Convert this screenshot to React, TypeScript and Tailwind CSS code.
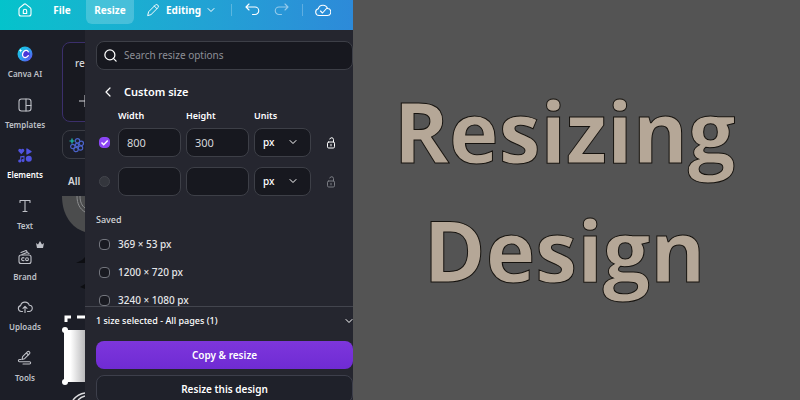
import React, { useState } from "react";
import { ChevronDown, ChevronLeft, Search } from "lucide-react";

const SAVED_SIZES = ["369 × 53 px", "1200 × 720 px", "3240 × 1080 px"];

function Icon({ children, className = "size-4" }: { children: React.ReactNode; className?: string }) {
  return (
    <svg
      viewBox="0 0 16 16"
      className={className}
      fill="none"
      stroke="currentColor"
      strokeWidth={1.1}
      strokeLinecap="round"
      strokeLinejoin="round"
      aria-hidden="true"
    >
      {children}
    </svg>
  );
}

const AiIcon = () => (
  <svg viewBox="0 0 16 16" className="size-4" aria-hidden="true">
    <defs>
      <linearGradient id="ai" x1="0" y1="0" x2="1" y2="1">
        <stop offset="0" stopColor="#12d2dc" />
        <stop offset="0.5" stopColor="#2aa4ee" />
        <stop offset="1" stopColor="#6a3df0" />
      </linearGradient>
    </defs>
    <circle cx="8" cy="8" r="7.5" fill="url(#ai)" />
    <circle cx="8.8" cy="8.2" r="4" fill="#4b35d8" />
    <path d="M11.3 5.8c-.7-1.6-2.8-1.9-4.3-.5-1.8 1.7-2 4.5-.5 5.7 1.5 1.1 3.7.4 4.8-1.4" fill="none" stroke="#fff" strokeWidth="1.3" strokeLinecap="round" />
    <path d="M3.6 2.8l.5 1.3 1.3.5-1.3.5-.5 1.3-.5-1.3-1.3-.5 1.3-.5z" fill="#fff" />
  </svg>
);

const TemplatesIcon = () => (
  <Icon>
    <rect x="2" y="2" width="12" height="12" rx="2.5" />
    <path d="M9 2v12M9 8.5h5" />
  </Icon>
);

const ElementsIcon = () => (
  <svg viewBox="0 0 16 16" className="size-4" fill="#5053e0" aria-hidden="true">
    <path d="M4.3 7.3L1.7 4.6C.2 2.8 2.8.4 4.3 2.5 5.8.4 8.4 2.8 6.9 4.6z" />
    <path d="M9.3 2c0-.6.5-.8 1-.5l4 2.5c.5.3.5.9 0 1.2l-4 2.2c-.5.3-1 0-1-.5z" />
    <path d="M3.2 9.3l4.3-.6v4.9a1.5 1.5 0 1 1-1-1.4v-2l-2.3.3v3.6a1.5 1.5 0 1 1-1-1.4z" />
    <circle cx="11.8" cy="11.8" r="3" />
  </svg>
);

const TextIcon = () => (
  <Icon>
    <path d="M3 4.500V2.500h10v2M8 2.500v11M6 13.500h4" />
  </Icon>
);

const BrandIcon = () => (
  <Icon>
    <rect x="2" y="6" width="12" height="8.5" rx="2" />
    <path d="M4 3.500l5-2 1 1M5 5.500l5-2 2 1" />
    <path d="M7 9a1.500 1.500 0 1 0 0 2.400" />
    <circle cx="10" cy="10.200" r="1.400" />
  </Icon>
);

const UploadsIcon = () => (
  <Icon>
    <path d="M5.500 12.500H4.200a3 3 0 0 1-.6-5.900A4.500 4.500 0 0 1 12.300 6.300a3.100 3.100 0 0 1-.3 6.200h-1.500" />
    <path d="M8 13.500V7.500M6 9.300l2-2 2 2" />
  </Icon>
);

const ToolsIcon = () => (
  <Icon>
    <path d="M5 9.500l.6-2.800 5-5c1.200-1 3 .7 2 2l-5 5zM9.500 3l2 2" />
    <path d="M4 9.500H2.500a1 1 0 0 0 0 2.200h10a1 1 0 0 1 0 2.300H6" />
  </Icon>
);

const LockIcon = () => (
  <svg viewBox="0 0 10 12" className="h-3 w-2.5" fill="none" stroke="currentColor" strokeLinecap="round" aria-hidden="true">
    <rect x="1.5" y="5" width="7" height="6" rx="1.2" />
    <path d="M7.5 5V2.600a1.900 1.900 0 0 0-3.700-.6M5 7.300v1.600" />
  </svg>
);

const NAV = [
  { label: "Canva AI", icon: AiIcon },
  { label: "Templates", icon: TemplatesIcon },
  { label: "Elements", icon: ElementsIcon, active: true },
  { label: "Text", icon: TextIcon },
  { label: "Brand", icon: BrandIcon, pro: true },
  { label: "Uploads", icon: UploadsIcon },
  { label: "Tools", icon: ToolsIcon },
];

function TopBar() {
  return (
    <header className="flex h-[30px] shrink-0 items-start bg-gradient-to-r from-[#04c3cb] to-[#2d8ad9] text-[10px] font-bold text-white">
      <button type="button" aria-label="Home" className="flex h-5 w-[50px] items-center justify-center">
        <Icon>
          <path d="M2 7.300c0-.7.300-1.200.9-1.700L7 2.300c.6-.5 1.400-.5 2 0l4.100 3.300c.6.500.9 1 .9 1.700V12a2 2 0 0 1-2 2H4a2 2 0 0 1-2-2z" />
          <path d="M6.300 11.500V9a1.700 1.700 0 0 1 3.400 0v2.500z" />
        </Icon>
      </button>
      <button type="button" className="h-5 w-6 text-center">File</button>
      <button type="button" className="ml-3 h-6 w-12 rounded-b-md bg-white/20 pb-1">Resize</button>
      <button type="button" className="ml-3 flex h-5 w-[71px] items-center">
        <Icon className="size-3.5">
          <path d="M2 14l1-4L11 2c1.500-1 4 1 3 3l-8 8zM9.500 3.500l3 3" />
        </Icon>
        <span className="ml-1.5 flex-1 text-left">Editing</span>
        <ChevronDown className="size-3" strokeWidth={2} />
      </button>
      <span className="mt-1 ml-3.5 h-3 w-px bg-white/25" />
      <button type="button" aria-label="Undo" className="ml-3 flex h-5 items-center">
        <Icon>
          <path d="M5 2L2 5l3 3M2 5h9a3.500 3.500 0 0 1 0 7.500H8.500" />
        </Icon>
      </button>
      <button type="button" aria-label="Redo" disabled className="ml-3.5 flex h-5 items-center opacity-50">
        <Icon>
          <path d="M11 2l3 3-3 3M14 5H5a3.500 3.500 0 0 0 0 7.500h2.500" />
        </Icon>
      </button>
      <span className="mt-1 ml-3 h-3 w-px bg-white/25" />
      <button type="button" aria-label="Saved" className="ml-3 flex h-5 items-center">
        <Icon>
          <path d="M4 13.500a3.400 3.400 0 0 1-.7-6.700 4.800 4.800 0 0 1 9.200-.3A3.500 3.500 0 0 1 12 13.500zM5.500 9l2 2 4-4.500" />
        </Icon>
      </button>
    </header>
  );
}

function SideNav() {
  return (
    <nav className="flex w-[50px] shrink-0 flex-col justify-between bg-[#1c1e27] pt-4 pb-3.5">
      {NAV.map(({ label, icon: NavIcon, active, pro }) => (
        <a
          key={label}
          href="#"
          className={`relative flex flex-col items-center gap-1 text-[8px] leading-4 font-semibold ${
            active ? "text-white" : "text-[#bfc1c8]"
          }`}
        >
          <NavIcon />
          {label}
          {pro && (
            <svg viewBox="0 0 8 7" className="absolute -top-2 right-1.5 h-[7px] w-2" fill="currentColor" aria-hidden="true">
              <path d="M0 2l2 1.500L4 0l2 3.500L8 2 7 7H1z" />
            </svg>
          )}
        </a>
      ))}
    </nav>
  );
}

function ElementsPanel() {
  return (
    <section className="flex w-[35px] shrink-0 flex-col overflow-hidden bg-[#1c1e27] pt-3 pl-3 text-[10px] text-[#d6d7db]">
      <div className="h-20 w-40 shrink-0 rounded-lg border border-[#3b2f6b] bg-[#181920] px-3 pt-3">
        <p className="leading-4 font-medium">re</p>
        <svg viewBox="0 0 12 12" className="mt-6 ml-1 size-3" stroke="currentColor" aria-hidden="true">
          <path d="M0 6h12M6 0v12" />
        </svg>
      </div>
      <div className="mt-2 flex h-[29px] w-40 shrink-0 items-center rounded-lg border border-[#3a3c44] px-1.5">
        <svg viewBox="0 0 16 16" className="size-4" fill="none" strokeWidth="1.2" aria-hidden="true">
          <g stroke="#4a62c8">
            <circle cx="8" cy="8" r="1.6" />
            <circle cx="8.5" cy="3.8" r="2.2" />
            <circle cx="12.3" cy="6.3" r="2.2" />
            <circle cx="11.5" cy="11" r="2.2" />
            <circle cx="7" cy="12.5" r="2.2" />
            <circle cx="3.8" cy="9.5" r="2.2" />
          </g>
          <path d="M3 1.500v5M.5 4h5" stroke="#20c3b8" />
        </svg>
      </div>
      <p className="mt-3.5 ml-1.5 leading-4 font-semibold">All</p>
      <svg viewBox="0 0 23 204" className="mt-[7px] h-[204px] w-[23px] shrink-0" aria-hidden="true">
        <defs>
          <linearGradient id="paper">
            <stop offset="0.3" stopColor="#fff" />
            <stop offset="1" stopColor="#b9b9bb" />
          </linearGradient>
        </defs>
        <path d="M0 0h23v36C9 32 0 18 0 0z" fill="#4b4c4d" />
        <path d="M15 0c0 8 3 13 8 16M18 0c0 6 2 10 5 12" fill="none" stroke="#8b8c8e" />
        <path d="M14 67l6-3 3-3v6zM18 91l5-3v5z" fill="#0d0e12" />
        <path d="M4 126v-5h5M15 121h8" fill="none" stroke="#fff" strokeWidth="3" />
        <path d="M2 134h21v52H2z" fill="url(#paper)" />
        <circle cx="3" cy="134" r="3" fill="#fff" />
        <circle cx="3" cy="186" r="3" fill="#fff" />
        <path d="M11 204q5-6 12-7M16 204q3-3 7-4" fill="none" stroke="#dcdcde" strokeWidth="1.5" />
      </svg>
    </section>
  );
}

function CheckBox({ label, ...rest }: { label?: string } & React.InputHTMLAttributes<HTMLInputElement>) {
  return (
    <span className="relative flex size-[11px] shrink-0">
      <input
        type="checkbox"
        aria-label={label}
        className="peer size-[11px] appearance-none rounded-[4px] border border-[#73757d] bg-[#191a21] checked:border-[#8b45f5] checked:bg-[#8b45f5] disabled:rounded-full disabled:border-[#43454c] disabled:bg-[#34363d]"
        {...rest}
      />
      <svg viewBox="0 0 11 11" className="pointer-events-none absolute inset-0 hidden size-[11px] peer-checked:block" fill="none" stroke="#fff" strokeWidth="1.4" aria-hidden="true">
        <path d="M2.500 5.500l2.200 2.300 4-4.300" />
      </svg>
    </span>
  );
}

function SizeRow({ index, width, height, disabled }: { index: number; width: string; height: string; disabled?: boolean }) {
  const [w, setW] = useState(width);
  const [h, setH] = useState(height);
  const field = "h-[29px] w-[63px] rounded-lg border border-[#3d3f47] bg-[#17181f] px-2 text-[11px] text-[#d5d6da] outline-none";

  return (
    <div className="flex items-center pl-[3px]">
      <CheckBox label={`Use size ${index}`} defaultChecked={!disabled} disabled={disabled} />
      <input aria-label={`Width ${index}`} value={w} onChange={(e) => setW(e.target.value)} className={`ml-2 ${field}`} />
      <input aria-label={`Height ${index}`} value={h} onChange={(e) => setH(e.target.value)} className={`ml-[5px] ${field}`} />
      <div className="relative ml-[5px]">
        <select
          aria-label={`Units ${index}`}
          className="h-[29px] w-[57px] appearance-none rounded-lg border border-[#3d3f47] bg-[#17181f] px-2 text-[10px] font-medium text-white"
        >
          <option>px</option>
          <option>in</option>
          <option>mm</option>
        </select>
        <ChevronDown className="pointer-events-none absolute top-2 right-3 size-3 text-white" strokeWidth={2} />
      </div>
      <button type="button" aria-label="Lock aspect ratio" disabled={disabled} className="ml-[15px] text-white disabled:text-[#7b7d84]">
        <LockIcon />
      </button>
    </div>
  );
}

function ResizePanel() {
  return (
    <section className="flex min-w-0 flex-1 flex-col bg-[#25262f] text-white">
      <div className="min-h-0 flex-1 overflow-hidden pt-[11px] pl-[11px]">
        <label className="flex h-[29px] items-center gap-1.5 rounded-lg border border-[#3d3f47] bg-[#17181f] px-1.5">
          <Search className="size-[15px] shrink-0" strokeWidth={2} />
          <input
            type="search"
            aria-label="Search resize options"
            placeholder="Search resize options"
            className="min-w-0 flex-1 text-[10px] outline-none placeholder:text-[#8d8f96]"
          />
        </label>

        <div className="mt-3.5 flex h-4 items-center gap-2 pl-1">
          <button type="button" aria-label="Back">
            <ChevronLeft className="size-4" strokeWidth={1.8} />
          </button>
          <h2 className="text-[11px] leading-4 font-semibold">Custom size</h2>
        </div>

        <div className="mt-2 mb-1 flex pl-[22px] text-[9px] leading-4 font-semibold">
          <span className="w-[68px]">Width</span>
          <span className="w-[68px]">Height</span>
          <span>Units</span>
        </div>
        <div className="flex flex-col gap-2.5">
          <SizeRow index={1} width="800" height="300" />
          <SizeRow index={2} width="" height="" disabled />
        </div>

        <h3 className="mt-4 text-[9px] leading-4 font-medium text-[#d5d6da]">Saved</h3>
        <ul className="mt-2 flex flex-col gap-3 pl-[3px]">
          {SAVED_SIZES.map((size, i) => (
            <li key={size} className="flex h-4 items-center gap-2 text-[10px] leading-4 font-medium text-[#e4e5e8]">
              <CheckBox id={`saved-${i}`} />
              <label htmlFor={`saved-${i}`}>{size}</label>
            </li>
          ))}
        </ul>
      </div>

      <footer className="h-[94px] shrink-0 overflow-hidden border-t border-[#43454e]">
        <button type="button" className="flex h-7 w-full items-center justify-between pl-[11px] text-[9px] font-medium">
          1 size selected - All pages (1)
          <ChevronDown className="-mr-0.5 size-3" strokeWidth={2} />
        </button>
        <div className="mt-1.5 flex flex-col gap-1.5 pl-[11px]">
          <button type="button" className="h-7 rounded-lg bg-gradient-to-b from-[#7d36dc] to-[#6f2bd3] text-[10px] font-semibold">
            Copy &amp; resize
          </button>
          <button type="button" className="h-7 rounded-lg border border-[#3d3f4b] bg-[#1f212a] text-[10px] font-semibold">
            Resize this design
          </button>
        </div>
      </footer>
    </section>
  );
}

export default function App() {
  return (
    <div className="flex h-screen overflow-hidden bg-[#545454] font-['Noto_Sans',sans-serif]">
      <div className="flex w-[353px] shrink-0 flex-col">
        <TopBar />
        <div className="flex min-h-0 flex-1">
          <SideNav />
          <ElementsPanel />
          <ResizePanel />
        </div>
      </div>
      <main className="flex flex-1 items-center justify-center pr-6 pb-5">
        <h1 className="text-center font-['Open_Sans',sans-serif] text-[84px] leading-[119px] font-bold text-[#b5a797] [-webkit-text-stroke:1px_#15120e]">
          Resizing
          <br />
          Design
        </h1>
      </main>
    </div>
  );
}
